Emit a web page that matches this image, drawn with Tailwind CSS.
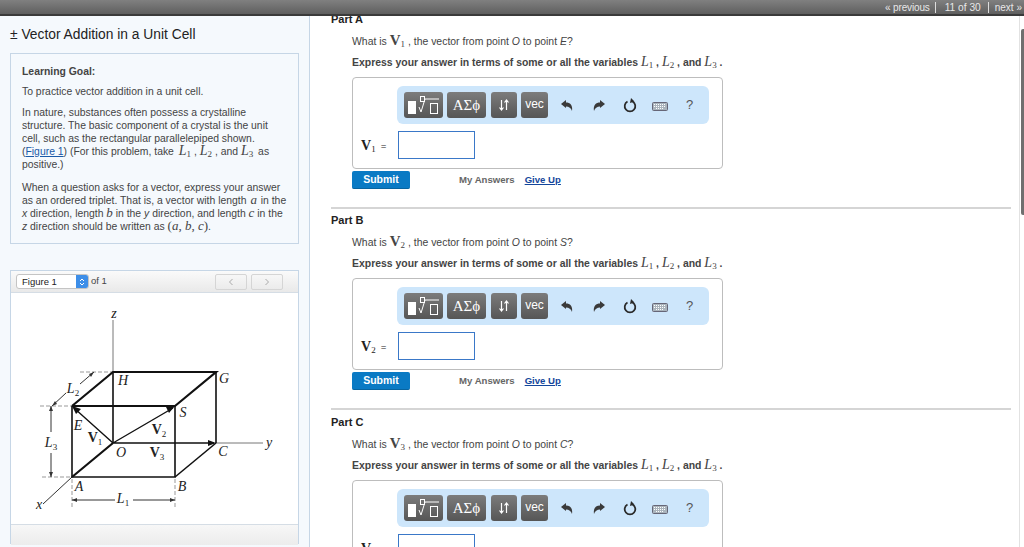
<!DOCTYPE html>
<html lang="en">
<head>
    <meta charset="UTF-8">
    <title>Vector Addition in a Unit Cell</title>
    <script src="https://cdn.jsdelivr.net/npm/@tailwindcss/browser@4"></script>
</head>
<body class="h-[547px] w-[1024px] overflow-hidden bg-white font-['Liberation_Sans',Arial,sans-serif] text-[#333]">
    <!-- Top bar -->
    <header class="h-4 flex items-center justify-end bg-gradient-to-b from-[#808080] to-[#5f5f5f] border-b-2 border-[#3a3a3a] text-[10px] text-[#e8e8e8]">
        <span class="pr-[5px] tracking-[-0.15px]">« previous</span>
        <span class="border-l border-[#ddd] pl-[9px] pr-[7px] leading-[11px] text-[10.2px]">11 of 30</span>
        <span class="border-l border-[#ddd] pl-[6px] pr-[2px] leading-[11px]">next »</span>
    </header>

    <div class="flex h-[531px] relative">
        <!-- Left column -->
        <aside class="w-[310px] shrink-0 bg-[#f5f9fd] border-r border-[#c6d6e6] px-[10px] overflow-hidden">
            <h1 class="mt-[10px] h-[17px] text-[13.8px] leading-[17px] text-[#222]">± Vector Addition in a Unit Cell</h1>
            <section class="mt-[10px] h-[191px] border border-[#c6d6e6] px-[11px] pt-[11px] text-[10.4px] leading-[13px] text-[#444] whitespace-nowrap">
                <p class="font-bold">Learning Goal:</p>
                <p class="mt-[7px]">To practice vector addition in a unit cell.</p>
                <p class="mt-[8px]">In nature, substances often possess a crystalline<br>structure. The basic component of a crystal is the unit<br>cell, such as the rectangular parallelepiped shown.<br>(<a href="#" class="text-[#1a5aa8] underline">Figure 1</a>) (For this problem, take <i class="font-['Liberation_Serif'] text-[14px] leading-[0] ml-[2px]">L</i><sub class="font-['Liberation_Serif'] text-[9px]">1</sub> , <i class="font-['Liberation_Serif'] text-[14px] leading-[0]">L</i><sub class="font-['Liberation_Serif'] text-[9px]">2</sub> , and <i class="font-['Liberation_Serif'] text-[14px] leading-[0]">L</i><sub class="font-['Liberation_Serif'] text-[9px] mr-[2px]">3</sub> as<br>positive.)</p>
                <p class="mt-[10px]">When a question asks for a vector, express your answer<br>as an ordered triplet. That is, a vector with length <i class="font-['Liberation_Serif'] text-[13px] leading-[0] mx-[1px]">a</i> in the<br><i>x</i> direction, length <i class="font-['Liberation_Serif'] text-[13px] leading-[0]">b</i> in the <i>y</i> direction, and length <i class="font-['Liberation_Serif'] text-[13px] leading-[0]">c</i> in the<br><i>z</i> direction should be written as <span class="font-['Liberation_Serif'] text-[13px] leading-[0]">(<i>a</i>, <i>b</i>, <i>c</i>)</span>.</p>
            </section>

            <!-- Figure panel -->
            <section class="mt-[26px] h-[274px] border border-[#c6d6e6] bg-white flex flex-col">
                <div class="h-[22px] shrink-0 flex items-center px-[5px] bg-gradient-to-b from-[#fafafa] to-[#e9e9e9] border-b border-[#d5dde5] text-[9.5px]">
                    <div class="flex h-[15px] w-[73px] border border-[#c4c4c4] rounded-[3px] bg-white overflow-hidden">
                        <span class="flex-1 pl-[5px] leading-[13px] text-[#222]">Figure 1</span>
                        <span class="w-[12px] bg-[#3d8ee8] flex items-center justify-center">
                            <svg width="6" height="10" viewBox="0 0 6 10" fill="none" stroke="#fff" stroke-width="1"><path d="M1 4 3 2 5 4M1 6 3 8 5 6"/></svg>
                        </span>
                    </div>
                    <span class="ml-[2px] text-[#444]">of 1</span>
                    <div class="ml-auto flex gap-[4px] mr-[10px]">
                        <span class="w-[32px] h-[16px] border border-[#d5d5d5] rounded-[2px] flex items-center justify-center">
                            <svg width="6" height="8" viewBox="0 0 6 8" fill="none" stroke="#aaa" stroke-width="1"><path d="M4.5 1 1.5 4 4.5 7"/></svg>
                        </span>
                        <span class="w-[32px] h-[16px] border border-[#d5d5d5] rounded-[2px] flex items-center justify-center">
                            <svg width="6" height="8" viewBox="0 0 6 8" fill="none" stroke="#aaa" stroke-width="1"><path d="M1.5 1 4.5 4 1.5 7"/></svg>
                        </span>
                    </div>
                </div>
                <div class="flex-1">
                    <svg width="286" height="231" viewBox="11 292 286 231" class="block" font-family="'Liberation Serif',serif" fill="#222">
                        <g fill="none" stroke="#777" stroke-width="1">
                            <path d="M113 319V371M216 442H263"/>
                            <path stroke="#999" stroke-dasharray="4 2" d="M80 371H113M40 405H72M42 476H72M72 478V507M175 478V507"/>
                            <path stroke="#333" d="M43 503 72 476M52 405 66 392M80 383 94 371M51 405V431M51 452V476M72 499H115M133 499H175"/>
                        </g>
                        <g fill="#333">
                            <path d="M72 499 77 497V501ZM175 499 170 497V501ZM51 405 49 410H53ZM51 476 49 471H53ZM52 405 57 403 55 400ZM94 371 89 373 91 376Z"/>
                        </g>
                        <g fill="none" stroke="#111" stroke-width="1.6">
                            <path d="M113 371V442M216 371V442M72 405V476H175V405"/>
                            <path d="M175 476 216 442"/>
                        </g>
                        <g fill="none" stroke="#111" stroke-width="2.2">
                            <path d="M72 405 113 371H216L175 405H72M72 476 113 442"/>
                        </g>
                        <g fill="none" stroke="#111" stroke-width="1.4">
                            <path d="M113 442 74 407M113 442 173 407M113 442H214"/>
                        </g>
                        <g fill="#111">
                            <path d="M72 405 81 408 76 413ZM175 405 169 412 166 406ZM216 442 208 445V439Z"/>
                        </g>
                        <g font-style="italic" font-size="14" text-anchor="middle">
                            <text x="123" y="384">H</text><text x="224" y="382">G</text>
                            <text x="183" y="416">S</text><text x="78" y="429">E</text>
                            <text x="121" y="456">O</text><text x="223" y="455">C</text>
                            <text x="79" y="490">A</text><text x="182" y="490">B</text>
                            <text x="114" y="317">z</text><text x="269" y="446">y</text>
                            <text x="39" y="508">x</text>
                            <text x="73" y="392">L<tspan font-size="9" dy="3" font-style="normal">2</tspan></text>
                            <text x="51" y="446">L<tspan font-size="9" dy="3" font-style="normal">3</tspan></text>
                            <text x="123" y="502">L<tspan font-size="9" dy="3" font-style="normal">1</tspan></text>
                        </g>
                        <g font-weight="bold" font-size="14" text-anchor="middle">
                            <text x="95" y="441">V<tspan font-size="9" dy="3" font-weight="normal">1</tspan></text>
                            <text x="159" y="433">V<tspan font-size="9" dy="3" font-weight="normal">2</tspan></text>
                            <text x="157" y="456">V<tspan font-size="9" dy="3" font-weight="normal">3</tspan></text>
                        </g>
                    </svg>
                </div>
                <div class="h-[21px] shrink-0 bg-gradient-to-b from-[#f7f7f7] to-[#ececec] border-t border-[#d5dde5]"></div>
            </section>
        </aside>

        <!-- Right column, scrolled so Part A's heading runs under the top bar -->
        <main class="flex-1 overflow-hidden pl-[21px] pr-[13px] text-[#444]">
            <div class="-mt-[4px]">
                <!-- Part A -->
                <section class="h-[197px] border-b-2 border-[#d5d5d5] flex flex-col">
                    <h2 class="h-[14px] text-[11px] leading-[14px] font-bold text-[#222]">Part A</h2>
                    <div class="pl-[21px] pt-[7px]">
                        <p class="h-[17px] text-[10.45px] leading-[17px]">What is <b class="font-['Liberation_Serif'] text-[15px] leading-[0]">V</b><sub class="font-['Liberation_Serif'] text-[9px]">1</sub> , the vector from point <i>O</i> to point <i>E</i>?</p>
                        <p class="mt-[5px] h-[16px] text-[10.45px] leading-[16px] font-bold">Express your answer in terms of some or all the variables <i class="font-['Liberation_Serif'] text-[14px] leading-[0] font-normal">L</i><sub class="font-['Liberation_Serif'] text-[9px] font-normal">1</sub> , <i class="font-['Liberation_Serif'] text-[14px] leading-[0] font-normal">L</i><sub class="font-['Liberation_Serif'] text-[9px] font-normal">2</sub> , and <i class="font-['Liberation_Serif'] text-[14px] leading-[0] font-normal">L</i><sub class="font-['Liberation_Serif'] text-[9px] font-normal">3</sub> .</p>
                        <div class="mt-[6px] w-[371px] h-[92px] border border-[#bdbdbd] rounded-[4px] pl-[44px] pt-[8px]">
                            <div class="w-[312px] h-[38px] bg-[#cde6fb] rounded-[6px] flex items-start pl-[7px] pt-[6px] text-white">
                                <span class="w-[39px] h-[26px] rounded-[3px] bg-gradient-to-b from-[#7c7c7c] to-[#565656] flex items-center justify-center">
                                    <svg width="33" height="20" viewBox="0 0 33 20" fill="none" stroke="#fff" stroke-width="1"><rect x="1" y="6" width="8" height="13" fill="#fff" stroke="none"/><rect x="13.5" y="1.5" width="4" height="5"/><path d="M12 12 14 17 18 4H32"/><rect x="23.5" y="8.5" width="7" height="10"/></svg>
                                </span>
                                <span class="ml-[4px] w-[39px] h-[26px] rounded-[3px] bg-gradient-to-b from-[#7c7c7c] to-[#565656] flex items-center justify-center font-['Liberation_Serif'] text-[15px]">ΑΣϕ</span>
                                <span class="ml-[5px] w-[26px] h-[26px] rounded-[3px] bg-gradient-to-b from-[#7c7c7c] to-[#565656] flex items-center justify-center">
                                    <svg width="12" height="12" viewBox="0 0 12 12" fill="none" stroke="#fff" stroke-width="1.2"><path d="M3.5 1V10.5M1.5 8.5 3.5 11 5.5 8.5M8.5 11V1.5M6.5 3.5 8.5 1 10.5 3.5"/></svg>
                                </span>
                                <span class="ml-[4px] w-[27px] h-[26px] rounded-[3px] bg-gradient-to-b from-[#7c7c7c] to-[#565656] flex items-center justify-center text-[12px] pb-[3px]">vec</span>
                                <svg class="ml-[13px] mt-[8px]" width="12" height="11" viewBox="0 0 12 11" fill="#3a3a3a"><path d="M0 4 5 0V2.5C9 2.500 12 5 11 11 10 8 8 6.500 5 6.500V8Z"/></svg>
                                <svg class="ml-[20px] mt-[8px]" width="12" height="11" viewBox="0 0 12 11" fill="#3a3a3a"><path d="M12 4 7 0V2.500C3 2.500 0 5 1 11 2 8 4 6.500 7 6.500V8Z"/></svg>
                                <svg class="ml-[18px] mt-[6px]" width="14" height="15" viewBox="0 0 14 15" fill="none" stroke="#2a2a2a" stroke-width="1.8"><path d="M4.500 3.500A5.300 5.300 0 1 0 9.500 3.500"/><path d="M8 0 11.500 3.500 7 5Z" fill="#2a2a2a" stroke="none"/></svg>
                                <svg class="ml-[15px] mt-[10px]" width="16" height="9" viewBox="0 0 16 9"><rect x=".5" y=".5" width="15" height="8" rx="1" fill="#aab4bc" stroke="#667"/><path d="M2 2.500H14M2 4.500H14M4 6.500H12" stroke="#fff" stroke-width="1" stroke-dasharray="1 1"/></svg>
                                <span class="ml-[18px] mt-[6px] text-[13px] leading-[14px] text-[#555]">?</span>
                            </div>
                            <div class="relative -ml-[36px] mt-[7px] flex items-center h-[28px]">
                                <span class="w-[37px] font-['Liberation_Serif'] text-[12px] text-[#222]"><b class="text-[14px]">V</b><sub class="text-[9px]">1</sub><span class="text-[10px] ml-[5px]">=</span></span>
                                <span class="w-[77px] h-[28px] bg-white border border-[#3a78c8]"></span>
                            </div>
                        </div>
                        <div class="mt-[2px] flex items-center h-[18px] text-[9.6px] font-bold">
                            <button class="w-[58px] h-[18px] bg-[#0a7ac4] rounded-[2px] border-b border-[#08649f] text-white text-[10.5px] font-bold">Submit</button>
                            <span class="ml-[49px] text-[#666]">My Answers</span>
                            <a href="#" class="ml-[10px] text-[#14469b] underline">Give Up</a>
                        </div>
                    </div>
                </section>

                <!-- Part B -->
                <section class="h-[201px] border-b-2 border-[#d5d5d5] flex flex-col">
                    <h2 class="h-[14px] mt-[4px] text-[11px] leading-[14px] font-bold text-[#222]">Part B</h2>
                    <div class="pl-[21px] pt-[7px]">
                        <p class="h-[17px] text-[10.45px] leading-[17px]">What is <b class="font-['Liberation_Serif'] text-[15px] leading-[0]">V</b><sub class="font-['Liberation_Serif'] text-[9px]">2</sub> , the vector from point <i>O</i> to point <i>S</i>?</p>
                        <p class="mt-[5px] h-[16px] text-[10.45px] leading-[16px] font-bold">Express your answer in terms of some or all the variables <i class="font-['Liberation_Serif'] text-[14px] leading-[0] font-normal">L</i><sub class="font-['Liberation_Serif'] text-[9px] font-normal">1</sub> , <i class="font-['Liberation_Serif'] text-[14px] leading-[0] font-normal">L</i><sub class="font-['Liberation_Serif'] text-[9px] font-normal">2</sub> , and <i class="font-['Liberation_Serif'] text-[14px] leading-[0] font-normal">L</i><sub class="font-['Liberation_Serif'] text-[9px] font-normal">3</sub> .</p>
                        <div class="mt-[6px] w-[371px] h-[92px] border border-[#bdbdbd] rounded-[4px] pl-[44px] pt-[8px]">
                            <div class="w-[312px] h-[38px] bg-[#cde6fb] rounded-[6px] flex items-start pl-[7px] pt-[6px] text-white">
                                <span class="w-[39px] h-[26px] rounded-[3px] bg-gradient-to-b from-[#7c7c7c] to-[#565656] flex items-center justify-center">
                                    <svg width="33" height="20" viewBox="0 0 33 20" fill="none" stroke="#fff" stroke-width="1"><rect x="1" y="6" width="8" height="13" fill="#fff" stroke="none"/><rect x="13.5" y="1.5" width="4" height="5"/><path d="M12 12 14 17 18 4H32"/><rect x="23.5" y="8.5" width="7" height="10"/></svg>
                                </span>
                                <span class="ml-[4px] w-[39px] h-[26px] rounded-[3px] bg-gradient-to-b from-[#7c7c7c] to-[#565656] flex items-center justify-center font-['Liberation_Serif'] text-[15px]">ΑΣϕ</span>
                                <span class="ml-[5px] w-[26px] h-[26px] rounded-[3px] bg-gradient-to-b from-[#7c7c7c] to-[#565656] flex items-center justify-center">
                                    <svg width="12" height="12" viewBox="0 0 12 12" fill="none" stroke="#fff" stroke-width="1.2"><path d="M3.5 1V10.5M1.5 8.5 3.5 11 5.5 8.5M8.5 11V1.5M6.5 3.5 8.5 1 10.5 3.5"/></svg>
                                </span>
                                <span class="ml-[4px] w-[27px] h-[26px] rounded-[3px] bg-gradient-to-b from-[#7c7c7c] to-[#565656] flex items-center justify-center text-[12px] pb-[3px]">vec</span>
                                <svg class="ml-[13px] mt-[8px]" width="12" height="11" viewBox="0 0 12 11" fill="#3a3a3a"><path d="M0 4 5 0V2.5C9 2.500 12 5 11 11 10 8 8 6.500 5 6.500V8Z"/></svg>
                                <svg class="ml-[20px] mt-[8px]" width="12" height="11" viewBox="0 0 12 11" fill="#3a3a3a"><path d="M12 4 7 0V2.500C3 2.500 0 5 1 11 2 8 4 6.500 7 6.500V8Z"/></svg>
                                <svg class="ml-[18px] mt-[6px]" width="14" height="15" viewBox="0 0 14 15" fill="none" stroke="#2a2a2a" stroke-width="1.8"><path d="M4.500 3.500A5.300 5.300 0 1 0 9.500 3.500"/><path d="M8 0 11.500 3.500 7 5Z" fill="#2a2a2a" stroke="none"/></svg>
                                <svg class="ml-[15px] mt-[10px]" width="16" height="9" viewBox="0 0 16 9"><rect x=".5" y=".5" width="15" height="8" rx="1" fill="#aab4bc" stroke="#667"/><path d="M2 2.500H14M2 4.500H14M4 6.500H12" stroke="#fff" stroke-width="1" stroke-dasharray="1 1"/></svg>
                                <span class="ml-[18px] mt-[6px] text-[13px] leading-[14px] text-[#555]">?</span>
                            </div>
                            <div class="relative -ml-[36px] mt-[7px] flex items-center h-[28px]">
                                <span class="w-[37px] font-['Liberation_Serif'] text-[12px] text-[#222]"><b class="text-[14px]">V</b><sub class="text-[9px]">2</sub><span class="text-[10px] ml-[5px]">=</span></span>
                                <span class="w-[77px] h-[28px] bg-white border border-[#3a78c8]"></span>
                            </div>
                        </div>
                        <div class="mt-[2px] flex items-center h-[18px] text-[9.6px] font-bold">
                            <button class="w-[58px] h-[18px] bg-[#0a7ac4] rounded-[2px] border-b border-[#08649f] text-white text-[10.5px] font-bold">Submit</button>
                            <span class="ml-[49px] text-[#666]">My Answers</span>
                            <a href="#" class="ml-[10px] text-[#14469b] underline">Give Up</a>
                        </div>
                    </div>
                </section>

                <!-- Part C -->
                <section class="flex flex-col">
                    <h2 class="h-[14px] mt-[5px] text-[11px] leading-[14px] font-bold text-[#222]">Part C</h2>
                    <div class="pl-[21px] pt-[7px]">
                        <p class="h-[17px] text-[10.45px] leading-[17px]">What is <b class="font-['Liberation_Serif'] text-[15px] leading-[0]">V</b><sub class="font-['Liberation_Serif'] text-[9px]">3</sub> , the vector from point <i>O</i> to point <i>C</i>?</p>
                        <p class="mt-[5px] h-[16px] text-[10.45px] leading-[16px] font-bold">Express your answer in terms of some or all the variables <i class="font-['Liberation_Serif'] text-[14px] leading-[0] font-normal">L</i><sub class="font-['Liberation_Serif'] text-[9px] font-normal">1</sub> , <i class="font-['Liberation_Serif'] text-[14px] leading-[0] font-normal">L</i><sub class="font-['Liberation_Serif'] text-[9px] font-normal">2</sub> , and <i class="font-['Liberation_Serif'] text-[14px] leading-[0] font-normal">L</i><sub class="font-['Liberation_Serif'] text-[9px] font-normal">3</sub> .</p>
                        <div class="mt-[6px] w-[371px] h-[92px] border border-[#bdbdbd] rounded-[4px] pl-[44px] pt-[8px]">
                            <div class="w-[312px] h-[38px] bg-[#cde6fb] rounded-[6px] flex items-start pl-[7px] pt-[6px] text-white">
                                <span class="w-[39px] h-[26px] rounded-[3px] bg-gradient-to-b from-[#7c7c7c] to-[#565656] flex items-center justify-center">
                                    <svg width="33" height="20" viewBox="0 0 33 20" fill="none" stroke="#fff" stroke-width="1"><rect x="1" y="6" width="8" height="13" fill="#fff" stroke="none"/><rect x="13.5" y="1.5" width="4" height="5"/><path d="M12 12 14 17 18 4H32"/><rect x="23.5" y="8.5" width="7" height="10"/></svg>
                                </span>
                                <span class="ml-[4px] w-[39px] h-[26px] rounded-[3px] bg-gradient-to-b from-[#7c7c7c] to-[#565656] flex items-center justify-center font-['Liberation_Serif'] text-[15px]">ΑΣϕ</span>
                                <span class="ml-[5px] w-[26px] h-[26px] rounded-[3px] bg-gradient-to-b from-[#7c7c7c] to-[#565656] flex items-center justify-center">
                                    <svg width="12" height="12" viewBox="0 0 12 12" fill="none" stroke="#fff" stroke-width="1.2"><path d="M3.5 1V10.5M1.5 8.5 3.5 11 5.5 8.5M8.5 11V1.5M6.5 3.5 8.5 1 10.5 3.5"/></svg>
                                </span>
                                <span class="ml-[4px] w-[27px] h-[26px] rounded-[3px] bg-gradient-to-b from-[#7c7c7c] to-[#565656] flex items-center justify-center text-[12px] pb-[3px]">vec</span>
                                <svg class="ml-[13px] mt-[8px]" width="12" height="11" viewBox="0 0 12 11" fill="#3a3a3a"><path d="M0 4 5 0V2.5C9 2.500 12 5 11 11 10 8 8 6.500 5 6.500V8Z"/></svg>
                                <svg class="ml-[20px] mt-[8px]" width="12" height="11" viewBox="0 0 12 11" fill="#3a3a3a"><path d="M12 4 7 0V2.500C3 2.500 0 5 1 11 2 8 4 6.500 7 6.500V8Z"/></svg>
                                <svg class="ml-[18px] mt-[6px]" width="14" height="15" viewBox="0 0 14 15" fill="none" stroke="#2a2a2a" stroke-width="1.8"><path d="M4.500 3.500A5.300 5.300 0 1 0 9.500 3.500"/><path d="M8 0 11.500 3.500 7 5Z" fill="#2a2a2a" stroke="none"/></svg>
                                <svg class="ml-[15px] mt-[10px]" width="16" height="9" viewBox="0 0 16 9"><rect x=".5" y=".5" width="15" height="8" rx="1" fill="#aab4bc" stroke="#667"/><path d="M2 2.500H14M2 4.500H14M4 6.500H12" stroke="#fff" stroke-width="1" stroke-dasharray="1 1"/></svg>
                                <span class="ml-[18px] mt-[6px] text-[13px] leading-[14px] text-[#555]">?</span>
                            </div>
                            <div class="relative -ml-[36px] mt-[7px] flex items-center h-[28px]">
                                <span class="w-[37px] font-['Liberation_Serif'] text-[12px] text-[#222]"><b class="text-[14px]">V</b><sub class="text-[9px]">3</sub><span class="text-[10px] ml-[5px]">=</span></span>
                                <span class="w-[77px] h-[28px] bg-white border border-[#3a78c8]"></span>
                            </div>
                        </div>
                    </div>
                </section>
            </div>
        </main>

        <!-- Scrollbar -->
        <div class="absolute right-0 top-0 bottom-0 w-[5px] border-l border-[#e2e2e2] bg-white">
            <div class="ml-[1px] mt-[13px] h-[186px] bg-[#6f6f6f] rounded-l-[2px]"></div>
        </div>
    </div>
</body>
</html>
